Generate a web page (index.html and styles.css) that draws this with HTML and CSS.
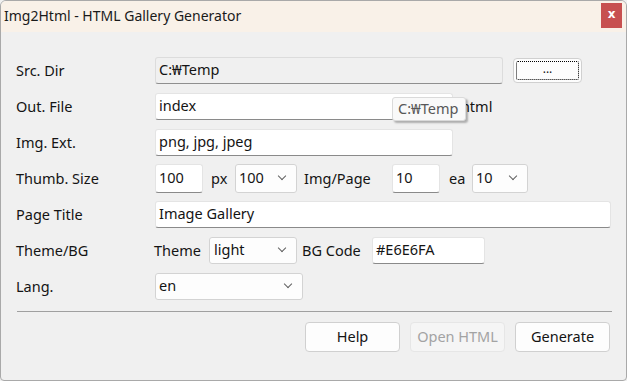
FILE: index.html
```html
<!DOCTYPE html>
<html>
<head>
<meta charset="utf-8">
<link rel="stylesheet" href="styles.css">
</head>
<body>
<div class="window">
  <div class="titlebar">
    <span class="title">Img2Html - HTML Gallery Generator</span>
    <span class="close">x</span>
  </div>
  <div class="content">
    <div class="row">
      <span class="label">Src. Dir</span>
      <span class="field readonly w-src">C:₩Temp</span>
      <span class="btn browse"><span class="focus">...</span></span>
    </div>
    <div class="row">
      <span class="label">Out. File</span>
      <span class="field w-out">index</span>
      <span class="suffix">.html</span>
      <span class="tooltip">C:₩Temp</span>
    </div>
    <div class="row">
      <span class="label">Img. Ext.</span>
      <span class="field w-out">png, jpg, jpeg</span>
    </div>
    <div class="row">
      <span class="label">Thumb. Size</span>
      <span class="field tall w-num">100</span>
      <span class="inl w-px">px</span>
      <span class="select tall w-sel1">100<i class="chev"></i></span>
      <span class="inl w-ipp">Img/Page</span>
      <span class="field tall w-num">10</span>
      <span class="inl w-ea">ea</span>
      <span class="select tall w-sel2">10<i class="chev"></i></span>
    </div>
    <div class="row">
      <span class="label">Page Title</span>
      <span class="field w-title">Image Gallery</span>
    </div>
    <div class="row">
      <span class="label">Theme/BG</span>
      <span class="inl w-theme">Theme</span>
      <span class="select w-sel3">light<i class="chev"></i></span>
      <span class="inl w-bg">BG Code</span>
      <span class="field w-bgc">#E6E6FA</span>
    </div>
    <div class="row">
      <span class="label">Lang.</span>
      <span class="select w-lang">en<i class="chev"></i></span>
    </div>
    <div class="sep"></div>
    <div class="buttons">
      <span class="btn act">Help</span>
      <span class="btn act disabled">Open HTML</span>
      <span class="btn act">Generate</span>
    </div>
  </div>
</div>
</body>
</html>
```

FILE: styles.css
```css
* { box-sizing: border-box; }
html, body { margin: 0; padding: 0; background: #f0f0f0; }
body {
  font-family: "Noto Sans", "Open Sans", "Noto Sans CJK KR", sans-serif;
  font-size: 14.5px;
  color: #141414;
}
.window {
  width: 627px;
  height: 381px;
  border: 1px solid #a9a9a9;
  border-radius: 6px 6px 4px 4px;
  background: #f0f0f0;
  overflow: hidden;
  display: flex;
  flex-direction: column;
}
.titlebar {
  height: 31px;
  background: #f9f1e8;
  display: flex;
  align-items: flex-start;
  justify-content: space-between;
  flex-shrink: 0;
}
.title {
  padding-left: 3px;
  padding-top: 5px;
  font-size: 14px;
  line-height: 20px;
  color: #1a1a1a;
}
.close {
  width: 21px;
  height: 25px;
  margin-top: 2px;
  margin-right: 4px;
  background: #c75050;
  color: #fff;
  font-family: "DejaVu Sans", sans-serif;
  font-weight: bold;
  font-size: 12px;
  line-height: 23px;
  text-align: center;
}
.content {
  padding: 20px 14px 0 15px;
  position: relative;
}
.row {
  height: 36px;
  display: flex;
  align-items: center;
  position: relative;
}
.label {
  width: 139px;
  flex-shrink: 0;
}
.field {
  height: 27px;
  background: #fff;
  border: 1px solid #e4e4e4;
  border-bottom: 1px solid #8a8a8a;
  border-radius: 3px;
  padding: 0 3px;
  display: flex;
  align-items: center;
  padding-bottom: 2px;
  flex-shrink: 0;
  white-space: nowrap;
}
.field.readonly {
  background: #f0f0f0;
  border-color: #dcdcdc;
  border-bottom-color: #8f8f8f;
}
.tall { height: 29px; }
.select {
  height: 27px;
  background: #fdfdfd;
  border: 1px solid #d3d3d3;
  border-radius: 3px;
  padding: 0 3px 2px;
  display: flex;
  align-items: center;
  position: relative;
  flex-shrink: 0;
}
.select.tall { height: 29px; }
.chev {
  position: absolute;
  right: 11px;
  top: 50%;
  width: 6px;
  height: 6px;
  margin-top: -5px;
  border-right: 1px solid #606060;
  border-bottom: 1px solid #606060;
  transform: rotate(45deg);
}
.inl { flex-shrink: 0; white-space: nowrap; }
.w-src { width: 348px; }
.w-out { width: 298px; }
.w-num { width: 48px; }
.w-px { width: 32px; padding-left: 8px; }
.w-sel1 { width: 62px; }
.w-ipp { width: 95px; padding-left: 7px; }
.w-ea { width: 32px; padding-left: 9px; }
.w-sel2 { width: 56px; }
.w-title { width: 456px; }
.w-theme { width: 55px; margin-left: -1px; }
.w-sel3 { width: 88px; padding-left: 4px; }
.w-bg { width: 75px; padding-left: 5px; }
.w-bgc { width: 113px; }
.w-lang { width: 148px; }
.suffix { padding-left: 4px; }
.btn {
  background: #fdfdfd;
  border: 1px solid #d0d0d0;
  border-radius: 4px;
  flex-shrink: 0;
}
.browse {
  width: 69px;
  height: 25px;
  margin-left: 10px;
  padding: 2px;
  display: flex;
}
.focus {
  flex: 1;
  border: 1px dotted #000;
  border-radius: 2px;
  display: flex;
  align-items: center;
  justify-content: center;
  font-size: 12px;
  line-height: 12px;
  padding-bottom: 2px;
}
.tooltip {
  position: absolute;
  left: 376px;
  top: 9px;
  width: 74px;
  height: 24px;
  background: #f9f9f9;
  border: 1px solid #dadada;
  border-radius: 3px;
  box-shadow: 2px 2px 2px rgba(0,0,0,0.28);
  color: #575757;
  padding-left: 5px;
  line-height: 21px;
}
.sep {
  height: 1px;
  background: #a0a0a0;
  margin-top: 7px;
  margin-left: 1px;
  width: 595px;
}
.buttons {
  display: flex;
  justify-content: flex-end;
  gap: 10px;
  margin-top: 10px;
  width: 594px;
}
.act {
  width: 95px;
  height: 30px;
  display: flex;
  align-items: center;
  justify-content: center;
  padding-bottom: 2px;
}
.disabled {
  background: #f5f5f5;
  border-color: #e6e6e6;
  color: #a3a3a3;
}
```
